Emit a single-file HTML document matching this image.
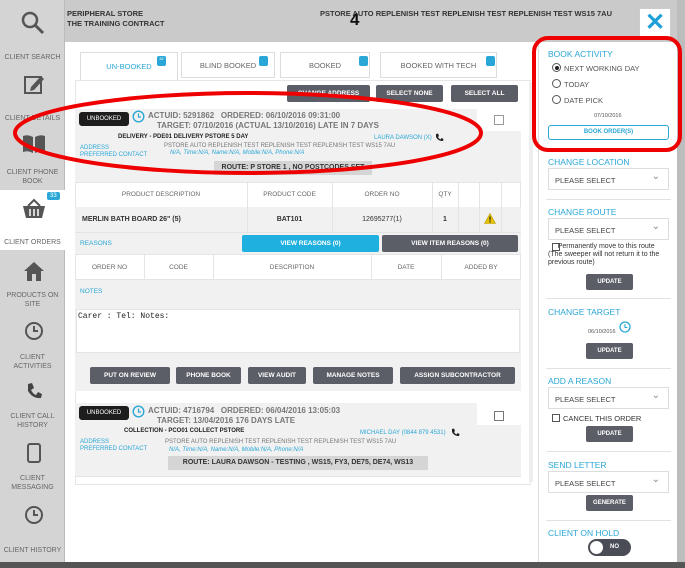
<!DOCTYPE html>
<html><head><meta charset="utf-8"><style>
*{box-sizing:border-box;margin:0;padding:0}
body{width:685px;height:568px;overflow:hidden;background:#cfcfcf;font-family:"Liberation Sans",sans-serif;position:relative;color:#333}
.a{position:absolute}
.side{left:0;top:0;width:65px;height:562px;background:#d4d4d4;border-right:1px solid #bbb}
.sl{position:absolute;left:0;width:65px;text-align:center;font-size:7px;color:#666;line-height:9px}
.btn{position:absolute;background:#5b5e66;color:#fff;font-size:6.5px;font-weight:bold;text-align:center;border-radius:2px}
.bl{color:#2aa7d6}
.h{font-size:8.5px;color:#2aa7d6;position:absolute;left:548px}
.sel{position:absolute;left:548px;width:121px;height:22px;border:1px solid #ddd;font-size:7.5px;padding:7px 0 0 6px;color:#444;background:#fff}
.sel:after{content:"⌄";position:absolute;right:8px;top:2px;font-size:10px;color:#888}
.up{position:absolute;left:586px;width:47px;height:16px;background:#5b5e66;color:#fff;font-size:6px;font-weight:bold;text-align:center;line-height:16px;border-radius:2px}
.hr{position:absolute;left:546px;width:125px;border-top:1px solid #e2e2e2}
.cell{position:absolute;font-size:6.5px;color:#666;text-align:center}
</style></head><body>
<div class="a" style="left:0;top:0;width:685px;height:42px;background:#cacaca"></div>
<div class="a" style="left:67px;top:9px;font-size:7.5px;font-weight:bold;color:#333;line-height:10px">PERIPHERAL STORE<br>THE TRAINING CONTRACT</div>
<div class="a" style="left:320px;top:9px;font-size:7.5px;font-weight:bold;color:#333">PSTORE AUTO REPLENISH TEST REPLENISH TEST REPLENISH TEST WS15 7AU</div>
<div class="a" style="left:350px;top:10px;font-size:17px;font-weight:bold;color:#111">4</div>
<div class="a" style="left:639px;top:8px;width:32px;height:30px;background:#fff;border:1px solid #ccc;color:#1e9fd8;font-size:24px;font-weight:bold;text-align:center;line-height:28px">✕</div>
<div class="a side"></div>
<svg class="a" style="left:20px;top:10px" width="26" height="26"><circle cx="10" cy="10" r="7" fill="none" stroke="#555" stroke-width="2.5"/><line x1="15" y1="15" x2="23" y2="23" stroke="#555" stroke-width="3"/></svg>
<div class="sl" style="top:53px">CLIENT SEARCH</div>
<svg class="a" style="left:23px;top:73px" width="22" height="22"><rect x="2" y="4" width="16" height="16" fill="none" stroke="#555" stroke-width="2"/><path d="M8 14 L18 3 L21 6 L11 17 L7 18Z" fill="#555"/></svg>
<div class="sl" style="top:114px">CLIENT DETAILS</div>
<svg class="a" style="left:22px;top:134px" width="24" height="20"><path d="M1 2 Q6 0 11 3 V19 Q6 16 1 18Z M13 3 Q18 0 23 2 V18 Q18 16 13 19Z" fill="#555"/></svg>
<div class="sl" style="top:168px">CLIENT PHONE<br>BOOK</div>
<div class="a" style="left:0;top:190px;width:65px;height:60px;background:#fff"></div>
<svg class="a" style="left:22px;top:198px" width="24" height="22"><path d="M6 8 L12 2 L18 8" fill="none" stroke="#555" stroke-width="2"/><path d="M1 8 H23 L20 20 H4Z" fill="#555"/><path d="M8 11V18M12 11V18M16 11V18" stroke="#fff" stroke-width="1.5"/></svg>
<div class="a" style="left:47px;top:192px;background:#2aa7d6;color:#fff;font-size:6px;padding:1px 3px;border-radius:2px">33</div>
<div class="sl" style="top:238px">CLIENT ORDERS</div>
<svg class="a" style="left:23px;top:260px" width="22" height="22"><path d="M11 2 L21 11 H18 V21 H4 V11 H1Z" fill="#555"/><rect x="9" y="14" width="4" height="7" fill="#d4d4d4"/></svg>
<div class="sl" style="top:291px">PRODUCTS ON<br>SITE</div>
<svg class="a" style="left:24px;top:321px" width="20" height="20"><circle cx="10" cy="10" r="8" fill="none" stroke="#555" stroke-width="2"/><path d="M10 5V10H14" fill="none" stroke="#555" stroke-width="2"/></svg>
<div class="sl" style="top:353px">CLIENT<br>ACTIVITIES</div>
<svg class="a" style="left:25px;top:382px" width="18" height="18"><path d="M3 2 L7 1 L9 6 L6 8 Q8 12 11 13 L13 10 L17 12 L16 16 Q8 17 3 9Z" fill="#444"/></svg>
<div class="sl" style="top:412px">CLIENT CALL<br>HISTORY</div>
<svg class="a" style="left:27px;top:443px" width="14" height="20"><rect x="1" y="1" width="12" height="18" rx="2" fill="none" stroke="#555" stroke-width="2"/></svg>
<div class="sl" style="top:474px">CLIENT<br>MESSAGING</div>
<svg class="a" style="left:24px;top:505px" width="20" height="20"><circle cx="10" cy="10" r="8" fill="none" stroke="#555" stroke-width="2"/><path d="M10 5V10H14" fill="none" stroke="#555" stroke-width="2"/></svg>
<div class="sl" style="top:546px">CLIENT HISTORY</div>
<div class="a" style="left:0;top:562px;width:685px;height:6px;background:#555"></div>
<div class="a" style="left:65px;top:42px;width:612px;height:520px;background:#fff"></div>
<div class="a" style="left:538px;top:42px;width:1px;height:520px;background:#ddd"></div>
<div class="a" style="left:677px;top:0;width:8px;height:562px;background:#bdbdbd"></div>
<!-- tabs -->
<div class="a" style="left:80px;top:52px;width:98px;height:30px;border:1px solid #ddd;border-bottom:none;font-size:7.5px;color:#2aa7d6;text-align:center;line-height:28px;background:#fff">UN-BOOKED</div>
<div class="a" style="left:181px;top:52px;width:94px;height:26px;border:1px solid #ddd;font-size:7.5px;color:#666;text-align:center;line-height:26px">BLIND BOOKED</div>
<div class="a" style="left:280px;top:52px;width:90px;height:26px;border:1px solid #ddd;font-size:7.5px;color:#666;text-align:center;line-height:26px">BOOKED</div>
<div class="a" style="left:380px;top:52px;width:117px;height:26px;border:1px solid #ddd;font-size:7.5px;color:#666;text-align:center;line-height:26px">BOOKED WITH TECH</div>
<div class="a" style="left:157px;top:56px;width:9px;height:10px;background:#2aa7d6;border-radius:2px;font-size:4px;color:#fff;text-align:center">32</div>
<div class="a" style="left:259px;top:56px;width:9px;height:10px;background:#2aa7d6;border-radius:2px"></div>
<div class="a" style="left:359px;top:56px;width:9px;height:10px;background:#2aa7d6;border-radius:2px"></div>
<div class="a" style="left:486px;top:56px;width:9px;height:10px;background:#2aa7d6;border-radius:2px"></div>
<div class="a" style="left:75px;top:80px;width:456px;height:405px;border:1px solid #e6e6e6;background:#fff"></div>
<div class="a" style="left:529px;top:82px;width:4px;height:400px;background:#eee"></div>
<div class="btn" style="left:287px;top:85px;width:83px;height:17px;line-height:17px">CHANGE ADDRESS</div>
<div class="btn" style="left:376px;top:85px;width:67px;height:17px;line-height:17px">SELECT NONE</div>
<div class="btn" style="left:451px;top:85px;width:67px;height:17px;line-height:17px">SELECT ALL</div>
<!-- card 1 -->
<div class="a" style="left:75px;top:109px;width:446px;height:73px;background:#f1f1f1"></div>
<div class="a" style="left:477px;top:109px;width:44px;height:22px;background:#fff"></div>
<div class="a" style="left:494px;top:115px;width:10px;height:10px;border:1px solid #999"></div>
<div class="a" style="left:79px;top:112px;width:50px;height:14px;background:#1d1d1d;border-radius:3px;color:#fff;font-size:6px;text-align:center;line-height:14px">UNBOOKED</div>
<svg class="a" style="left:132px;top:110px" width="13" height="13"><circle cx="6.5" cy="6.5" r="5.3" fill="none" stroke="#2aa7d6" stroke-width="1.4"/><path d="M6.5 3.5V7H9" fill="none" stroke="#2aa7d6" stroke-width="1.2"/></svg>
<div class="a" style="left:148px;top:111px;font-size:8px;font-weight:bold;color:#777;line-height:9.5px">ACTUID: 5291862 &nbsp; ORDERED: 06/10/2016 09:31:00<br>&nbsp;&nbsp;&nbsp;&nbsp;TARGET: 07/10/2016 (ACTUAL 13/10/2016) LATE IN 7 DAYS</div>
<div class="a" style="left:118px;top:134px;font-size:6px;font-weight:bold;color:#222">DELIVERY - PDE01 DELIVERY PSTORE 5 DAY</div>
<div class="a bl" style="left:374px;top:135px;font-size:6px">LAURA DAWSON (X)</div>
<svg class="a" style="left:435px;top:133px" width="9" height="9"><path d="M1 1 L3 0.5 L4 3 L3 4 Q4 6 5.5 6.5 L6.5 5 L8.5 6 L8 8 Q3.5 8.5 1 4Z" fill="#222"/></svg>
<div class="a" style="left:164px;top:143px;font-size:6px;color:#777">PSTORE AUTO REPLENISH TEST REPLENISH TEST REPLENISH TEST WS15 7AU</div>
<div class="a bl" style="left:80px;top:145px;font-size:6px;line-height:7px">ADDRESS<br>PREFERRED CONTACT</div>
<div class="a bl" style="left:170px;top:150px;font-size:6px;font-style:italic">N/A, Time:N/A, Name:N/A, Mobile:N/A, Phone:N/A</div>
<div class="a" style="left:214px;top:161px;width:158px;height:14px;background:#d5d5d5;font-size:7px;font-weight:bold;color:#333;text-align:center;line-height:14px">ROUTE: P STORE 1 , NO POSTCODES SET</div>
<!-- product table -->
<div class="a" style="left:75px;top:182px;width:446px;height:51px;border:1px solid #e4e4e4"></div>
<div class="a" style="left:75px;top:207px;width:446px;height:25px;background:#f1f1f1"></div>
<div class="a" style="left:247px;top:182px;width:1px;height:50px;background:#e4e4e4"></div>
<div class="a" style="left:332px;top:182px;width:1px;height:50px;background:#e4e4e4"></div>
<div class="a" style="left:432px;top:182px;width:1px;height:50px;background:#e4e4e4"></div>
<div class="a" style="left:458px;top:182px;width:1px;height:50px;background:#e4e4e4"></div>
<div class="a" style="left:479px;top:182px;width:1px;height:50px;background:#e4e4e4"></div>
<div class="a" style="left:501px;top:182px;width:1px;height:50px;background:#e4e4e4"></div>
<div class="cell" style="left:75px;top:191px;width:172px">PRODUCT DESCRIPTION</div>
<div class="cell" style="left:247px;top:191px;width:85px">PRODUCT CODE</div>
<div class="cell" style="left:332px;top:191px;width:100px">ORDER NO</div>
<div class="cell" style="left:432px;top:191px;width:26px">QTY</div>
<div class="a" style="left:82px;top:216px;font-size:7px;font-weight:bold;color:#333">MERLIN BATH BOARD 26" (5)</div>
<div class="cell" style="left:247px;top:216px;width:85px;font-size:7px;font-weight:bold;color:#333">BAT101</div>
<div class="cell" style="left:332px;top:216px;width:100px;font-size:7px;color:#333">12695277(1)</div>
<div class="cell" style="left:432px;top:216px;width:26px;font-size:7px;font-weight:bold;color:#333">1</div>
<svg class="a" style="left:484px;top:213px" width="12" height="11"><path d="M6 0.5 L11.5 10.5 H0.5Z" fill="#e8c400" stroke="#b99700" stroke-width=".6"/><rect x="5.4" y="3.5" width="1.2" height="4" fill="#222"/><rect x="5.4" y="8.3" width="1.2" height="1.2" fill="#222"/></svg>
<!-- reasons -->
<div class="a" style="left:75px;top:233px;width:446px;height:21px;background:#f1f1f1"></div>
<div class="a bl" style="left:80px;top:240px;font-size:6.5px">REASONS</div>
<div class="btn" style="left:242px;top:235px;width:137px;height:17px;line-height:17px;background:#1fb0e0">VIEW REASONS (0)</div>
<div class="btn" style="left:382px;top:235px;width:136px;height:17px;line-height:17px">VIEW ITEM REASONS (0)</div>
<div class="a" style="left:75px;top:254px;width:446px;height:26px;border:1px solid #e4e4e4"></div>
<div class="a" style="left:144px;top:254px;width:1px;height:26px;background:#e4e4e4"></div>
<div class="a" style="left:213px;top:254px;width:1px;height:26px;background:#e4e4e4"></div>
<div class="a" style="left:371px;top:254px;width:1px;height:26px;background:#e4e4e4"></div>
<div class="a" style="left:441px;top:254px;width:1px;height:26px;background:#e4e4e4"></div>
<div class="cell" style="left:75px;top:264px;width:69px">ORDER NO</div>
<div class="cell" style="left:144px;top:264px;width:69px">CODE</div>
<div class="cell" style="left:213px;top:264px;width:158px">DESCRIPTION</div>
<div class="cell" style="left:371px;top:264px;width:70px">DATE</div>
<div class="cell" style="left:441px;top:264px;width:80px">ADDED BY</div>
<div class="a" style="left:75px;top:280px;width:446px;height:111px;background:#f1f1f1"></div>
<div class="a bl" style="left:80px;top:288px;font-size:6.5px">NOTES</div>
<div class="a" style="left:76px;top:309px;width:444px;height:44px;background:#fff;border:1px solid #e4e4e4;font-family:'Liberation Mono',monospace;font-size:8px;padding:2px 1px;color:#222">Carer : Tel:  Notes:</div>
<div class="btn" style="left:90px;top:367px;width:80px;height:17px;line-height:17px">PUT ON REVIEW</div>
<div class="btn" style="left:176px;top:367px;width:65px;height:17px;line-height:17px">PHONE BOOK</div>
<div class="btn" style="left:248px;top:367px;width:58px;height:17px;line-height:17px">VIEW AUDIT</div>
<div class="btn" style="left:313px;top:367px;width:80px;height:17px;line-height:17px">MANAGE NOTES</div>
<div class="btn" style="left:400px;top:367px;width:115px;height:17px;line-height:17px">ASSIGN SUBCONTRACTOR</div>
<!-- card 2 -->
<div class="a" style="left:75px;top:403px;width:446px;height:73px;background:#f1f1f1"></div>
<div class="a" style="left:477px;top:403px;width:44px;height:22px;background:#fff"></div>
<div class="a" style="left:494px;top:411px;width:10px;height:10px;border:1px solid #777"></div>
<div class="a" style="left:79px;top:406px;width:50px;height:14px;background:#1d1d1d;border-radius:3px;color:#fff;font-size:6px;text-align:center;line-height:14px">UNBOOKED</div>
<svg class="a" style="left:132px;top:405px" width="13" height="13"><circle cx="6.5" cy="6.5" r="5.3" fill="none" stroke="#2aa7d6" stroke-width="1.4"/><path d="M6.5 3.5V7H9" fill="none" stroke="#2aa7d6" stroke-width="1.2"/></svg>
<div class="a" style="left:148px;top:406px;font-size:8px;font-weight:bold;color:#777;line-height:9.5px">ACTUID: 4716794 &nbsp; ORDERED: 06/04/2016 13:05:03<br>&nbsp;&nbsp;&nbsp;&nbsp;TARGET: 13/04/2016 176 DAYS LATE</div>
<div class="a" style="left:124px;top:428px;font-size:6px;font-weight:bold;color:#222">COLLECTION - PCO01 COLLECT PSTORE</div>
<div class="a bl" style="left:360px;top:430px;font-size:6px">MICHAEL DAY (0844 879 4531)</div>
<svg class="a" style="left:451px;top:428px" width="9" height="9"><path d="M1 1 L3 0.5 L4 3 L3 4 Q4 6 5.5 6.5 L6.5 5 L8.5 6 L8 8 Q3.5 8.5 1 4Z" fill="#222"/></svg>
<div class="a bl" style="left:80px;top:439px;font-size:6px;line-height:7px">ADDRESS<br>PREFERRED CONTACT</div>
<div class="a" style="left:165px;top:439px;font-size:6px;color:#777">PSTORE AUTO REPLENISH TEST REPLENISH TEST REPLENISH TEST WS15 7AU</div>
<div class="a bl" style="left:169px;top:447px;font-size:6px;font-style:italic">N/A, Time:N/A, Name:N/A, Mobile:N/A, Phone:N/A</div>
<div class="a" style="left:168px;top:456px;width:260px;height:14px;background:#d5d5d5;font-size:7px;font-weight:bold;color:#333;text-align:center;line-height:14px">ROUTE: LAURA DAWSON - TESTING , WS15, FY3, DE75, DE74, WS13</div>
<div class="a" style="left:75px;top:476px;width:446px;height:1px;background:#e4e4e4"></div>
<!-- right panel -->
<div class="h" style="top:49px">BOOK ACTIVITY</div>
<div class="a" style="left:552px;top:63px;width:9px;height:9px;border:1px solid #555;border-radius:50%"><div style="margin:1.5px;width:4px;height:4px;background:#222;border-radius:50%"></div></div>
<div class="a" style="left:564px;top:64px;font-size:7.5px;color:#555">NEXT WORKING DAY</div>
<div class="a" style="left:552px;top:79px;width:9px;height:9px;border:1px solid #555;border-radius:50%"></div>
<div class="a" style="left:564px;top:80px;font-size:7.5px;color:#555">TODAY</div>
<div class="a" style="left:552px;top:95px;width:9px;height:9px;border:1px solid #555;border-radius:50%"></div>
<div class="a" style="left:564px;top:96px;font-size:7.5px;color:#555">DATE PICK</div>
<div class="a" style="left:594px;top:113px;font-size:5.5px;color:#555">07/10/2016</div>
<div class="a" style="left:548px;top:125px;width:121px;height:15px;border:1px solid #2aa7d6;border-radius:3px;font-size:6px;font-weight:bold;color:#2aa7d6;text-align:center;line-height:13px">BOOK ORDER(S)</div>
<div class="hr" style="top:151px"></div>
<div class="h" style="top:157px">CHANGE LOCATION</div>
<div class="sel" style="top:168px">PLEASE SELECT</div>
<div class="hr" style="top:199px"></div>
<div class="h" style="top:207px">CHANGE ROUTE</div>
<div class="sel" style="top:218px">PLEASE SELECT</div>
<div class="a" style="left:552px;top:243px;width:8px;height:8px;border:1px solid #555"></div>
<div class="a" style="left:548px;top:243px;font-size:7px;color:#333;line-height:8px">&nbsp;&nbsp;&nbsp;&nbsp;&nbsp;Permanently move to this route<br>(The sweeper will not return it to the<br>previous route)</div>
<div class="up" style="top:274px">UPDATE</div>
<div class="hr" style="top:298px"></div>
<div class="h" style="top:307px">CHANGE TARGET</div>
<div class="a" style="left:588px;top:329px;font-size:5.5px;color:#555">06/10/2016</div>
<svg class="a" style="left:619px;top:321px" width="12" height="12"><circle cx="6" cy="6" r="5" fill="none" stroke="#2aa7d6" stroke-width="1.3"/><path d="M6 3V6.5H8.5" fill="none" stroke="#2aa7d6" stroke-width="1.1"/></svg>
<div class="up" style="top:343px">UPDATE</div>
<div class="hr" style="top:368px"></div>
<div class="h" style="top:376px">ADD A REASON</div>
<div class="sel" style="top:387px">PLEASE SELECT</div>
<div class="a" style="left:552px;top:414px;width:8px;height:8px;border:1px solid #555"></div>
<div class="a" style="left:563px;top:414px;font-size:7.5px;color:#333">CANCEL THIS ORDER</div>
<div class="up" style="top:426px">UPDATE</div>
<div class="hr" style="top:451px"></div>
<div class="h" style="top:460px">SEND LETTER</div>
<div class="sel" style="top:471px">PLEASE SELECT</div>
<div class="up" style="top:495px">GENERATE</div>
<div class="hr" style="top:520px"></div>
<div class="h" style="top:528px">CLIENT ON HOLD</div>
<div class="a" style="left:588px;top:539px;width:43px;height:17px;background:#4a4d55;border-radius:9px"><div style="position:absolute;left:2px;top:2px;width:13px;height:13px;background:#fff;border-radius:50%"></div><div style="position:absolute;left:22px;top:5px;font-size:6px;color:#fff;font-weight:bold">NO</div></div>
<!-- red annotations -->
<svg class="a" style="left:0;top:0" width="685" height="568"><ellipse cx="248" cy="133" rx="233" ry="40" fill="none" stroke="#e00" stroke-width="4"/><rect x="534" y="38" width="146" height="112" rx="14" fill="none" stroke="#e00" stroke-width="4"/></svg>
</body></html>
